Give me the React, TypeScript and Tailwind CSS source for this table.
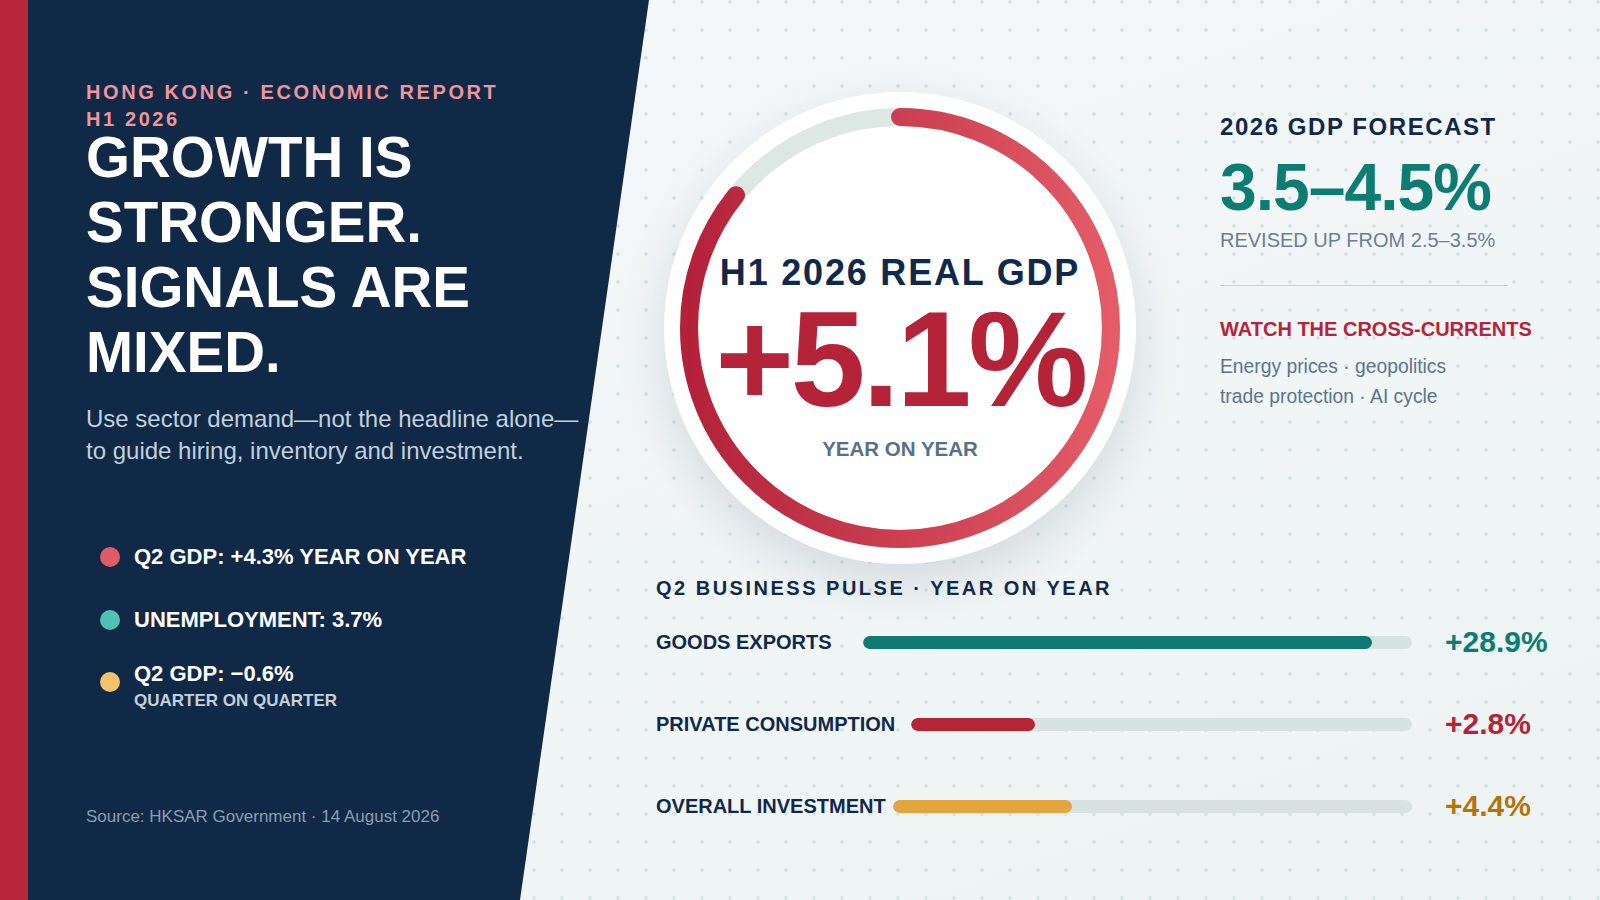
import React from "react";

const bars = [
  {
    label: "GOODS EXPORTS",
    gap: "ml-[31px]",
    pct: 92.7,
    fill: "bg-[#0e7a71]",
    value: "+28.9%",
    valueColor: "text-[#0e7c72]",
  },
  {
    label: "PRIVATE CONSUMPTION",
    gap: "ml-[16px]",
    pct: 24.8,
    fill: "bg-[#b42536]",
    value: "+2.8%",
    valueColor: "text-[#b42338]",
  },
  {
    label: "OVERALL INVESTMENT",
    gap: "ml-[7px]",
    pct: 34.5,
    fill: "bg-[#e3a53d]",
    value: "+4.4%",
    valueColor: "text-[#b3740b]",
  },
];

function Ring() {
  const r = 211;
  const c = 2 * Math.PI * r;
  return (
    <svg className="absolute inset-0" width="472" height="472" viewBox="0 0 472 472">
      <defs>
        <linearGradient id="ringGrad" x1="0" y1="25" x2="0" y2="447" gradientUnits="userSpaceOnUse">
          <stop offset="0" stopColor="#b3223a" />
          <stop offset="1" stopColor="#e35c67" />
        </linearGradient>
      </defs>
      <circle cx="236" cy="236" r={r} fill="none" stroke="#dde8e5" strokeWidth="18" />
      <circle
        cx="236"
        cy="236"
        r={r}
        fill="none"
        stroke="url(#ringGrad)"
        strokeWidth="18"
        strokeLinecap="round"
        strokeDasharray={`${c * 0.858} ${c}`}
        transform="rotate(-90 236 236)"
      />
    </svg>
  );
}

export default function App() {
  return (
    <div className="w-[1600px] h-[900px] overflow-hidden flex font-['Liberation_Sans',Arial,sans-serif] bg-[radial-gradient(circle_at_2px_2px,#d8e5e5_1.6px,transparent_2.2px),linear-gradient(160deg,#f5f8fa,#edf3f3)] bg-[length:28px_28px,100%_100%]">
      {/* Left panel */}
      <div className="w-[650px] h-full shrink-0 flex bg-[#0f2946] [clip-path:polygon(0_0,649px_0,520px_100%,0_100%)]">
        <div className="w-[28px] h-full bg-[#b7263a]" />
        <div className="pl-[58px] pt-[79px] flex flex-col">
          <div className="text-[20px] leading-[27px] font-bold tracking-[0.13em] text-[#f0959e] whitespace-nowrap">
            <div>HONG KONG · ECONOMIC REPORT</div>
            <div>H1 2026</div>
          </div>
          <h1 className="mt-[-8px] text-[56.5px] leading-[65px] font-bold text-white whitespace-nowrap">
            GROWTH IS
            <br />
            STRONGER.
            <br />
            SIGNALS ARE
            <br />
            MIXED.
          </h1>
          <p className="mt-[18px] text-[24px] leading-[32px] text-[#c3d0de] whitespace-nowrap">
            Use sector demand—not the headline alone—
            <br />
            to guide hiring, inventory and investment.
          </p>

          <div className="mt-[76px] pl-[14px] flex flex-col">
            <div className="h-[28px] flex items-center gap-[14px]">
              <span className="w-[20px] h-[20px] rounded-full bg-[#e15b65] shrink-0" />
              <span className="text-[22px] leading-[28px] font-bold text-white whitespace-nowrap">
                Q2 GDP: +4.3% YEAR ON YEAR
              </span>
            </div>
            <div className="mt-[34.5px] h-[28px] flex items-center gap-[14px]">
              <span className="w-[20px] h-[20px] rounded-full bg-[#4fc2b4] shrink-0" />
              <span className="text-[22px] leading-[28px] font-bold text-white whitespace-nowrap">
                UNEMPLOYMENT: 3.7%
              </span>
            </div>
            <div className="mt-[27.4px] flex items-start gap-[14px]">
              <span className="mt-[11.6px] w-[20px] h-[20px] rounded-full bg-[#f0c46b] shrink-0" />
              <div className="flex flex-col">
                <span className="text-[22px] leading-[26px] font-bold text-white whitespace-nowrap">
                  Q2 GDP: −0.6%
                </span>
                <span className="mt-[4px] text-[17px] leading-[20px] font-bold text-[#c5cfda] whitespace-nowrap">
                  QUARTER ON QUARTER
                </span>
              </div>
            </div>
          </div>

          <div className="mt-[96.6px] text-[17px] leading-[20px] text-[#8d9db1] whitespace-nowrap">
            Source: HKSAR Government · 14 August 2026
          </div>
        </div>
      </div>

      {/* Main area */}
      <div className="flex-1 flex flex-col pt-[92px]">
        <div className="flex items-start">
          <div className="ml-[14px] relative w-[472px] h-[472px] shrink-0 rounded-full bg-white shadow-[0_18px_50px_rgba(16,42,72,0.13)]">
            <Ring />
            <div className="relative flex flex-col items-center pt-[160.4px]">
              <div className="text-[36px] leading-[42px] font-bold tracking-[0.05em] text-[#10294a] whitespace-nowrap">
                H1 2026 REAL GDP
              </div>
              <div className="mt-[0px] text-[135px] leading-[132px] font-bold tracking-[-0.025em] text-[#b42338] whitespace-nowrap">
                +5.1%
              </div>
              <div className="mt-[10px] text-[20.5px] leading-[26px] font-bold text-[#56708a] whitespace-nowrap">
                YEAR ON YEAR
              </div>
            </div>
          </div>

          <div className="ml-[84px] flex flex-col">
            <div className="mt-[20.2px] text-[24px] leading-[30px] font-bold tracking-[0.065em] text-[#10294a] whitespace-nowrap">
              2026 GDP FORECAST
            </div>
            <div className="mt-[9.9px] text-[66px] leading-[70px] font-bold tracking-[-0.015em] text-[#0d7d72] whitespace-nowrap">
              3.5–4.5%
            </div>
            <div className="mt-[5.3px] text-[20px] leading-[26px] text-[#6a7f94] whitespace-nowrap">
              REVISED UP FROM 2.5–3.5%
            </div>
            <div className="mt-[31.6px] w-[288px] h-[1.5px] bg-[#c4d3d3]" />
            <div className="mt-[29.7px] text-[20px] leading-[26px] font-bold text-[#b5243a] whitespace-nowrap">
              WATCH THE CROSS-CURRENTS
            </div>
            <div className="mt-[10.3px] text-[19.3px] leading-[30px] text-[#5e7489] whitespace-nowrap">
              Energy prices · geopolitics
              <br />
              trade protection · AI cycle
            </div>
          </div>
        </div>

        <div className="ml-[6px] mt-[11px] w-[901px] flex flex-col">
          <div className="text-[20px] leading-[26px] font-bold tracking-[0.125em] text-[#12294a] whitespace-nowrap">
            Q2 BUSINESS PULSE · YEAR ON YEAR
          </div>
          {bars.map((b) => (
            <div key={b.label} className="h-[82px] flex items-center">
              <span className="text-[20px] leading-[26px] font-bold text-[#10294a] whitespace-nowrap">
                {b.label}
              </span>
              <div className={`${b.gap} flex-1 h-[13px] rounded-full bg-[#d8e3e1] overflow-hidden`}>
                <div className={`h-full rounded-full ${b.fill}`} style={{ width: `${b.pct}%` }} />
              </div>
              <span className={`ml-[33px] w-[112px] text-[30px] leading-[34px] font-bold ${b.valueColor} whitespace-nowrap`}>
                {b.value}
              </span>
            </div>
          ))}
        </div>
      </div>
    </div>
  );
}
